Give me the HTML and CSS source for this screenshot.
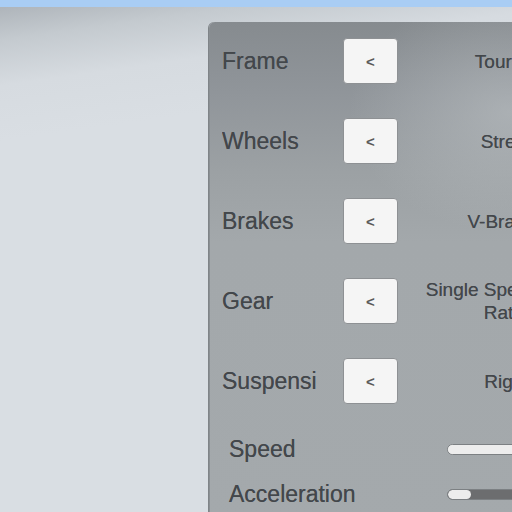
FILE: index.html
```html
<!DOCTYPE html>
<html>
<head>
<meta charset="utf-8">
<link rel="stylesheet" href="styles.css">
</head>
<body>
<div class="topbar"></div>
<div class="stage">
  <div class="panel">
    <div class="row">
      <div class="label">Frame</div>
      <div class="btn">&lt;</div>
      <div class="value">Touring</div>
    </div>
    <div class="row">
      <div class="label">Wheels</div>
      <div class="btn">&lt;</div>
      <div class="value">Street</div>
    </div>
    <div class="row">
      <div class="label">Brakes</div>
      <div class="btn">&lt;</div>
      <div class="value">V-Brakes</div>
    </div>
    <div class="row">
      <div class="label">Gear</div>
      <div class="btn">&lt;</div>
      <div class="value">Single Speed Gear Ratio</div>
    </div>
    <div class="row">
      <div class="label">Suspension</div>
      <div class="btn">&lt;</div>
      <div class="value">Rigid</div>
    </div>
    <div class="stat first">
      <div class="stat-label">Speed</div>
      <div class="track"><div class="fill" style="width:100%"></div></div>
    </div>
    <div class="stat">
      <div class="stat-label">Acceleration</div>
      <div class="track dark"><div class="fill" style="width:23px"></div></div>
    </div>
  </div>
</div>
</body>
</html>
```
FILE: styles.css
```css
html, body {
  margin: 0;
  padding: 0;
  width: 512px;
  height: 512px;
  overflow: hidden;
}
body {
  font-family: "Liberation Sans", Arial, sans-serif;
  background: linear-gradient(172deg, #aab0b6 0px, #c4cacf 40px, #d6dbe0 85px, #d9dee3 140px, #d9dee3 100%);
}
.topbar {
  height: 7px;
  background: #a9cdf4;
}
.stage {
  display: flex;
  padding-left: 209px;
  padding-top: 15px;
}
.panel {
  width: 480px;
  height: 520px;
  flex: none;
  border-top-left-radius: 6px;
  box-sizing: border-box;
  padding: 16px 0 0 13px;
  background:
    radial-gradient(ellipse 160px 120px at 300px 90px, rgba(190,195,198,0.55), rgba(190,195,198,0) 100%),
    linear-gradient(180deg, #868b8f 0px, #90959a 70px, #9ca1a4 150px, #a3a8ab 220px, #a4a9ac 100%);
  box-shadow: -1px 0 0 #7f8488, inset 1px 0 0 #8a8f93;
  color: #43474b;
  text-shadow: 0 0 0.6px rgba(67,71,75,0.8);
}
.row {
  display: flex;
  align-items: center;
  height: 46px;
  margin-bottom: 34px;
}
.label {
  width: 95px;
  margin-right: 26px;
  font-size: 23px;
  white-space: nowrap;
  overflow: hidden;
}
.btn {
  width: 55px;
  height: 46px;
  box-sizing: border-box;
  border: 1px solid #8e9194;
  border-radius: 4px;
  background: #f5f5f5;
  display: flex;
  align-items: center;
  justify-content: center;
  font-size: 15px;
  font-weight: bold;
  color: #5a5a5a;
  text-shadow: none;
  flex: none;
}
.value {
  width: 200px;
  margin-left: 8px;
  text-align: center;
  font-size: 19px;
  line-height: 23px;
  flex: none;
}
.stat {
  display: flex;
  align-items: center;
  height: 22px;
  padding-left: 7px;
}
.stat.first {
  margin-top: 5px;
  margin-bottom: 23px;
}
.stat-label {
  width: 218px;
  font-size: 23px;
  white-space: nowrap;
}
.track {
  width: 200px;
  height: 11px;
  box-sizing: border-box;
  border: 1px solid #7c8083;
  border-radius: 6px;
  background: #ececec;
  overflow: hidden;
  flex: none;
}
.track.dark {
  background: #6c6d6f;
}
.fill {
  height: 100%;
  background: #ededed;
  border-radius: 5px;
}
```
